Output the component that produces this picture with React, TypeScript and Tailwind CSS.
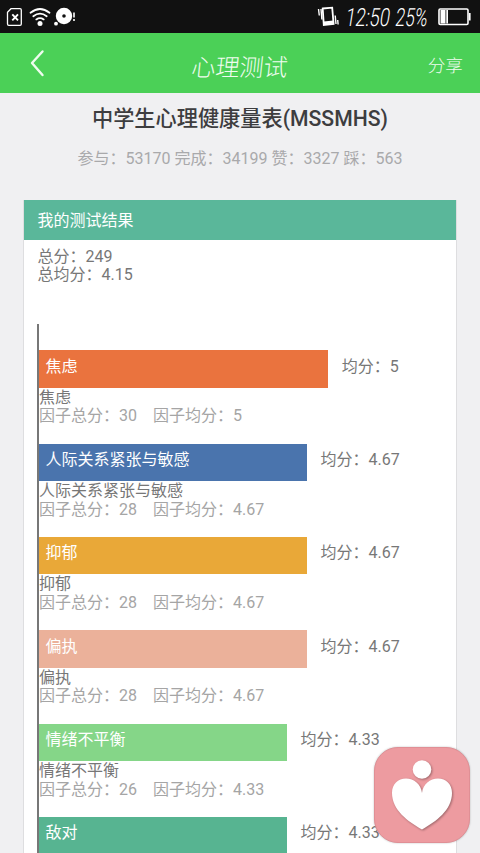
import { CSSProperties } from "react";

interface Factor {
  name: string;
  total?: number;
  average: string;
  width: number;
  color: string;
}

const factors: Factor[] = [
  { name: "焦虑", total: 30, average: "5", width: 289.3, color: "bg-[#ea733e]" },
  {
    name: "人际关系紧张与敏感",
    total: 28,
    average: "4.67",
    width: 268,
    color: "bg-[#4a74ad]",
  },
  { name: "抑郁", total: 28, average: "4.67", width: 268, color: "bg-[#e9a838]" },
  { name: "偏执", total: 28, average: "4.67", width: 268, color: "bg-[#ebb19a]" },
  {
    name: "情绪不平衡",
    total: 26,
    average: "4.33",
    width: 248,
    color: "bg-[#85d688]",
  },
  { name: "敌对", average: "4.33", width: 248, color: "bg-[#57b491]" },
];

export default function App(): JSX.Element {
  return (
    <div className="relative flex h-[853px] w-[480px] flex-col overflow-hidden bg-[#f0f0f2] font-['Roboto','Noto_Sans_CJK_SC',sans-serif] text-base leading-[18.67px]">
      <StatusBar />
      <NavBar />
      <div className="flex flex-col items-center">
        <h1 className="mt-3.5 text-[21.2px] leading-6 font-medium whitespace-nowrap text-[#3d3d3f]">
          中学生心理健康量表(MSSMHS)
        </h1>
        <p className="mt-[19px] whitespace-nowrap text-[#a9a9ab]">
          参与：53170 完成：34199 赞：3327 踩：563
        </p>
      </div>
      <ResultCard />
      <FloatingButton />
    </div>
  );
}

function StatusBar(): JSX.Element {
  return (
    <div className="flex h-[33px] shrink-0 items-center bg-[#111] text-white">
      <svg width="82" height="33" viewBox="0 0 82 33" fill="none" stroke="currentColor">
        <path
          d="M11 8.7H20q1.3 0 1.3 1.3V24q0 1.3-1.3 1.3H8.8q-1.3 0-1.3-1.3V12.2z"
          strokeWidth="1.3"
        />
        <path d="m12.300 14.300 5.700 6m0-6-5.700 6" strokeWidth="1.9" />
        <path
          d="M30.500 12.700q9.500-7.500 19 0M33.300 16.200q6.700-5.200 13.400 0M36.300 19.400q3.700-2.600 7.400 0"
          strokeWidth="1.8"
          strokeLinecap="round"
        />
        <circle cx="40" cy="23.5" r="2.5" fill="currentColor" stroke="none" />
        <circle cx="64" cy="16" r="5" strokeWidth="6.4" />
        <circle cx="56" cy="23.7" r="1.9" fill="currentColor" stroke="none" />
        <path d="M74 12.500v5M74 19v2" strokeWidth="1.6" />
      </svg>
      <svg
        className="ml-auto"
        width="24"
        height="33"
        viewBox="317 0 24 33"
        fill="none"
        stroke="currentColor"
      >
        <path d="m323.700 8.500 9.500-.8 1.400 16.300-9.800 1z" strokeWidth="1.8" />
        <path d="m324.800 23.200 9.700-1" strokeWidth="3.2" />
        <path
          d="m319.500 9 .8 6.500m1.700-6.500.9 10.500m13.300-4 .8 8.500m1.700-4 .4 4.500"
          strokeWidth="1.4"
        />
      </svg>
      <span className="ml-1.5 w-[47px] origin-left scale-x-[0.73] -skew-x-12 pt-1 text-[25px] font-light">
        12:50
      </span>
      <span className="ml-[3px] w-[35px] origin-left scale-x-[0.69] -skew-x-12 pt-1 text-[25px] font-light">
        25%
      </span>
      <svg
        className="mr-2 ml-1.5"
        width="35"
        height="33"
        viewBox="436 0 35 33"
        fill="none"
        stroke="currentColor"
      >
        <rect x="438" y="9" width="29" height="15.5" rx="1.2" strokeWidth="1.6" />
        <path
          d="M439.500 10h5v13.500h-5zM445.300 10h1.700v13.500h-1.700z"
          fill="currentColor"
          stroke="none"
        />
        <path d="M468.700 13v7.500" strokeWidth="1.8" />
      </svg>
    </div>
  );
}

function NavBar(): JSX.Element {
  return (
    <div className="grid h-[60px] shrink-0 grid-cols-3 items-center bg-[#4bd057] font-['Noto_Sans_CJK_SC',sans-serif] text-[#effcef]">
      <svg
        className="ml-[30px]"
        width="16"
        height="28"
        viewBox="0 0 16 28"
        fill="none"
        stroke="currentColor"
        strokeWidth="2.4"
        strokeLinecap="round"
        strokeLinejoin="round"
      >
        <path d="M12.500 2.500 2 14 12.500 26" />
      </svg>
      <span className="-skew-x-6 pt-[5px] text-center text-2xl font-light">心理测试</span>
      <span className="-skew-x-3 pt-1 pr-[17px] text-right text-[17.5px] font-light">
        分享
      </span>
    </div>
  );
}

function ResultCard(): JSX.Element {
  return (
    <div className="mx-[23px] mt-[31px] flex min-h-0 flex-1 flex-col border-x border-[#dedee0] bg-white">
      <div className="h-10 shrink-0 bg-[#5ab79a] pt-3 pl-[13.5px] text-white">
        我的测试结果
      </div>
      <div className="mt-2 pl-[13.5px] text-[#777]">
        <p>总分：249</p>
        <p>总均分：4.15</p>
      </div>
      <div className="mt-[38.5px] ml-[13px] flex flex-1 flex-col gap-[18.67px] border-l-2 border-[#777] pt-[26.7px]">
        {factors.map((factor) => (
          <FactorItem key={factor.name} factor={factor} />
        ))}
      </div>
    </div>
  );
}

function FactorItem(props: { factor: Factor }): JSX.Element {
  const { name, total, average, width, color } = props.factor;
  const barStyle: CSSProperties = { width };
  return (
    <div className="shrink-0">
      <div className="flex h-[37.33px]">
        <div className={`${color} pt-[7.5px] pl-[6.5px] text-white`} style={barStyle}>
          {name}
        </div>
        <span className="ml-[13.5px] pt-[7.5px] text-[#777]">均分：{average}</span>
      </div>
      {total !== undefined && (
        <div className="relative top-px">
          <p className="text-[#777]">{name}</p>
          <p className="flex gap-4 text-[#a5a5a5]">
            <span>因子总分：{total}</span>
            <span>因子均分：{average}</span>
          </p>
        </div>
      )}
    </div>
  );
}

function FloatingButton(): JSX.Element {
  return (
    <button
      className="absolute top-[747px] left-[374px] h-24 w-24 rounded-[24px] border border-[#e08f95] bg-[#ed9ba0] shadow-[0_0_2px_#0004]"
      aria-label="心理测试"
    >
      <svg
        className="drop-shadow-[1px_1px_1px_#0005]"
        width="94"
        height="94"
        viewBox="375 748 94 94"
        fill="#fff"
      >
        <circle cx="422" cy="769.5" r="9.3" />
        <path d="M422 793C421 784 414 778.500 406 778.500C398 778.500 392 784 392 793C392 810 408 821.500 422 829.500C436 821.500 452 810 452 793C452 784 446 778.500 438 778.500C430 778.500 423 784 422 793z" />
      </svg>
    </button>
  );
}
